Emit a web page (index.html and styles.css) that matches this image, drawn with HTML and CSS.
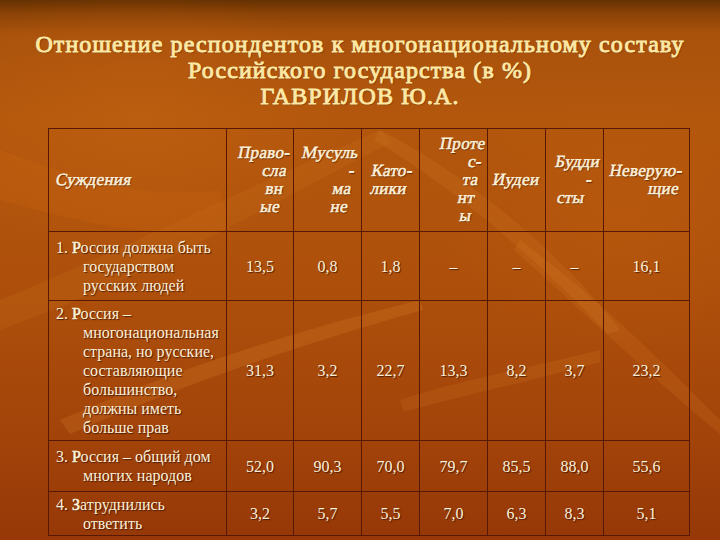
FILE: index.html
```html
<!DOCTYPE html>
<html>
<head>
<meta charset="utf-8">
<title>Отношение респондентов</title>
<link rel="stylesheet" href="styles.css">
</head>
<body>
<div class="slide">
  <svg class="deco" width="720" height="540" viewBox="0 0 720 540" aria-hidden="true">
    <path d="M0 300 C120 250 220 200 380 130 L392 142 C240 220 140 280 0 330 Z" fill="#e08a2a" opacity="0.12"/>
    <path d="M60 420 C200 360 300 330 420 300 L423 310 C300 345 200 378 70 434 Z" fill="#f0a040" opacity="0.16"/>
    <path d="M520 240 C600 300 660 360 720 420 L720 434 C650 376 590 318 514 250 Z" fill="#e89030" opacity="0.14"/>
    <path d="M380 130 C460 170 560 250 620 330 L608 334 C540 262 452 186 374 140 Z" fill="#f0a040" opacity="0.12"/>
    <path d="M0 150 C80 180 150 200 220 190 L230 230 C150 240 70 220 0 200 Z" fill="#c86412" opacity="0.3"/>
    <path d="M400 400 C460 380 520 370 600 350 L600 362 C520 384 460 396 404 412 Z" fill="#f09a3a" opacity="0.12"/>
  </svg>
  <div class="title">Отношение респондентов к многонациональному составу<br>Российского государства (в %)<br>ГАВРИЛОВ Ю.А.</div>
  <table class="grid">
    <colgroup>
      <col class="c-label"><col class="c-a"><col class="c-b"><col class="c-c"><col class="c-b"><col class="c-c"><col class="c-c"><col class="c-d">
    </colgroup>
    <thead>
      <tr class="r-head">
        <td class="hd h-left"><span class="sk">Суждения</span></td>
        <td class="hd h-right"><span class="sk">Право-<br>сла<br>вн<br>ые</span></td>
        <td class="hd h-right"><span class="sk">Мусуль<br>-<br>ма<br>не</span></td>
        <td class="hd h-center"><span class="sk">Като-<br>лики</span></td>
        <td class="hd h-right"><span class="sk">Проте<br>с-<br>та<br>нт<br>ы</span></td>
        <td class="hd h-center"><span class="sk">Иудеи</span></td>
        <td class="hd h-center"><span class="sk">Будди<br><span class="dash">-</span><br>сты</span></td>
        <td class="hd h-right"><span class="sk">Неверую-<br>щие</span></td>
      </tr>
    </thead>
    <tbody>
      <tr class="r1">
        <td class="label">1. <span class="fb">Р</span>оссия должна быть<br>государством<br>русских людей</td>
        <td>13,5</td><td>0,8</td><td>1,8</td><td>–</td><td>–</td><td>–</td><td>16,1</td>
      </tr>
      <tr class="r2">
        <td class="label">2. <span class="fb">Р</span>оссия –<br>многонациональная<br>страна, но русские,<br>составляющие<br>большинство,<br>должны иметь<br>больше прав</td>
        <td>31,3</td><td>3,2</td><td>22,7</td><td>13,3</td><td>8,2</td><td>3,7</td><td>23,2</td>
      </tr>
      <tr class="r3">
        <td class="label">3. <span class="fb">Р</span>оссия – общий дом<br>многих народов</td>
        <td>52,0</td><td>90,3</td><td>70,0</td><td>79,7</td><td>85,5</td><td>88,0</td><td>55,6</td>
      </tr>
      <tr class="r4">
        <td class="label">4. <span class="fb">З</span>атруднились<br>ответить</td>
        <td>3,2</td><td>5,7</td><td>5,5</td><td>7,0</td><td>6,3</td><td>8,3</td><td>5,1</td>
      </tr>
    </tbody>
  </table>
</div>
</body>
</html>
```

FILE: styles.css
```css
html, body {
  margin: 0;
  padding: 0;
}
body {
  width: 720px;
  height: 540px;
  overflow: hidden;
  font-family: "Liberation Serif", serif;
}
.slide {
  position: relative;
  width: 720px;
  height: 540px;
  overflow: hidden;
  background:
    radial-gradient(ellipse 300px 200px at 140px 120px, rgba(210,110,20,0.3), rgba(210,110,20,0) 70%),
    radial-gradient(ellipse 260px 180px at 620px 220px, rgba(200,100,15,0.25), rgba(200,100,15,0) 70%),
    linear-gradient(180deg, #663102 0px, #8c4306 14px, #a9520c 34px, #b3570d 120px, #ad4f0b 300px, #a2430a 440px, #963807 540px);
  padding-top: 31px;
  box-sizing: border-box;
}
.deco {
  position: absolute;
  left: 0;
  top: 0;
  z-index: 0;
}
.title {
  position: relative;
  margin: 0;
  text-align: center;
  font-family: "Liberation Serif", serif;
  font-size: 24px;
  line-height: 26px;
  font-weight: 400;
  letter-spacing: 1.1px;
  color: #fde9a6;
  -webkit-text-stroke: 0.9px #fde9a6;
  text-shadow: 1px 1px 1px rgba(70, 25, 0, 0.55);
}
.grid {
  position: relative;
  margin: 19px 0 0 48px;
  border-collapse: collapse;
  table-layout: fixed;
  width: 641px;
  color: #fbf0d8;
  font-family: "Liberation Serif", serif;
}
.c-label { width: 178px; }
.c-a { width: 67px; }
.c-b { width: 68px; }
.c-c { width: 58px; }
.c-d { width: 86px; }
.grid td {
  border: 1px solid #571805;
  padding: 0;
  vertical-align: middle;
  font-size: 16px;
  line-height: 19px;
  text-align: center;
  text-shadow: 1px 1px 1px rgba(50, 15, 0, 0.75);
}
.grid td.hd {
  font-size: 17px;
  line-height: 18px;
  font-weight: 400;
  letter-spacing: 0.3px;
}
.sk {
  display: inline-block;
  transform: skewX(-11deg);
  -webkit-text-stroke: 0.55px #fbf0d8;
}
.fb {
  -webkit-text-stroke: 0.6px #fbf0d8;
}
.r-head { height: 103px; }
.r1 { height: 69px; }
.r2 { height: 140px; }
.r3 { height: 51px; }
.r4 { height: 44px; }
.grid td.h-left {
  text-align: left;
  padding-left: 7px;
}
.grid td.h-right {
  text-align: right;
  padding-right: 8px;
}
.grid td.h-center { text-align: center; }
.dash {
  position: relative;
  left: 15px;
}
.grid td.label {
  text-align: left;
  padding-left: 34px;
  text-indent: -27px;
  padding-right: 2px;
  white-space: nowrap;
}
```
